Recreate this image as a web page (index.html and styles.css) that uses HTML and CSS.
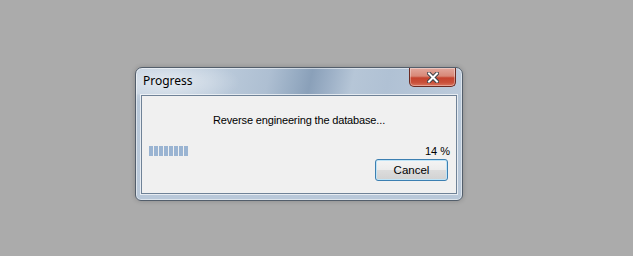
FILE: index.html
```html
<!DOCTYPE html>
<html>
<head>
    <meta charset="utf-8">
    <title>Progress</title>
    <link rel="stylesheet" href="styles.css">
</head>
<body>
    <div class="window">
        <div class="titlebar">
            <span class="title">Progress</span>
            <button class="close" aria-label="Close">
                <svg width="12" height="11" viewBox="0 0 12 11">
                    <path d="M2 1.5 L10 9.5 M10 1.5 L2 9.5" stroke="#3b4148" stroke-width="4" stroke-linecap="square"/>
                    <path d="M2 1.5 L10 9.5 M10 1.5 L2 9.5" stroke="#ffffff" stroke-width="2" stroke-linecap="square"/>
                </svg>
            </button>
        </div>
        <div class="panel">
            <p class="message">Reverse engineering the database...</p>
            <div class="progress-row">
                <div class="progress">
                    <span class="block"></span>
                    <span class="block"></span>
                    <span class="block"></span>
                    <span class="block"></span>
                    <span class="block"></span>
                    <span class="block"></span>
                    <span class="block"></span>
                    <span class="block"></span>
                </div>
                <span class="percent">14 %</span>
            </div>
            <div class="actions">
                <button class="btn">Cancel</button>
            </div>
        </div>
    </div>
</body>
</html>
```

FILE: styles.css
```css
html, body {
    margin: 0;
    height: 100%;
}

body {
    background: #ababab;
    padding: 67px 0 0 135px;
    box-sizing: border-box;
    font: 11px "Liberation Sans", Arial, sans-serif;
    color: #000;
}

/* window frame (aero glass look) */
.window {
    width: 316px;
    padding: 0 5px 6px;
    border: 1px solid #535e6b;
    border-radius: 7px 7px 6px 6px;
    background:
        radial-gradient(ellipse 70px 22px at 34px 14px, rgba(255,255,255,.55), rgba(255,255,255,0)),
        linear-gradient(180deg, rgba(0,0,0,0) 0px, rgba(0,0,0,0) 26px, #b7c7d8 27px, #b9c8d9 100%),
        linear-gradient(102deg, #c3d1e0 0%, #bdccdc 22%, #aebfd2 38%, #96abc2 46%, #8aa0b9 50%, #9fb2c8 56%, #b6c6d7 62%, #b0c1d4 72%, #b9c8d9 88%, #c0cedd 100%);
    box-shadow: inset 0 0 0 1px rgba(255,255,255,.5), 0 0 5px rgba(0,0,0,.2);
}

.titlebar {
    height: 27px;
    display: flex;
    justify-content: space-between;
    align-items: flex-start;
}

.title {
    padding: 5px 0 0 2px;
    font: 12px/16px "Noto Sans", "Open Sans", sans-serif;
    color: #000;
}

.close {
    width: 47px;
    height: 19px;
    margin-right: 1px;
    padding: 0;
    display: flex;
    align-items: center;
    justify-content: center;
    border: 1px solid #6b2a22;
    border-top: 0;
    border-radius: 0 0 5px 5px;
    background: linear-gradient(#e2a89d 0%, #d88877 45%, #c5432e 55%, #c9503a 80%, #d9745e 100%);
    box-shadow: inset 0 0 0 1px rgba(255,255,255,.35);
}

.panel {
    height: 99px;
    box-sizing: border-box;
    padding: 18px 7px 0 7px;
    background: #f0f0f0;
    border: 1px solid #6f8297;
    box-shadow: 0 0 0 1px rgba(255,255,255,.65);
    display: flex;
    flex-direction: column;
}

.message {
    margin: 0;
    line-height: 13px;
    text-align: center;
    letter-spacing: -0.15px;
}

.progress-row {
    margin-top: 18px;
    display: flex;
    justify-content: space-between;
    align-items: flex-start;
    line-height: 13px;
}

.progress {
    display: flex;
    gap: 1px;
    margin-top: 1px;
}

.block {
    width: 4px;
    height: 10px;
    background: #9ab4d2;
}

.percent {
    margin-right: -1px;
}

.actions {
    display: flex;
    justify-content: flex-end;
    margin-top: 1px;
}

.btn {
    width: 73px;
    height: 22px;
    margin-right: 1px;
    padding: 0;
    font: 11.5px "Liberation Sans", Arial, sans-serif;
    color: #000;
    border: 1px solid #3c7fb1;
    border-radius: 3px;
    background: linear-gradient(#f4f4f4 0%, #ececec 48%, #dcdcdc 52%, #d2d2d2 100%);
    box-shadow: inset 0 0 0 1px #bfe4f7;
}
```
